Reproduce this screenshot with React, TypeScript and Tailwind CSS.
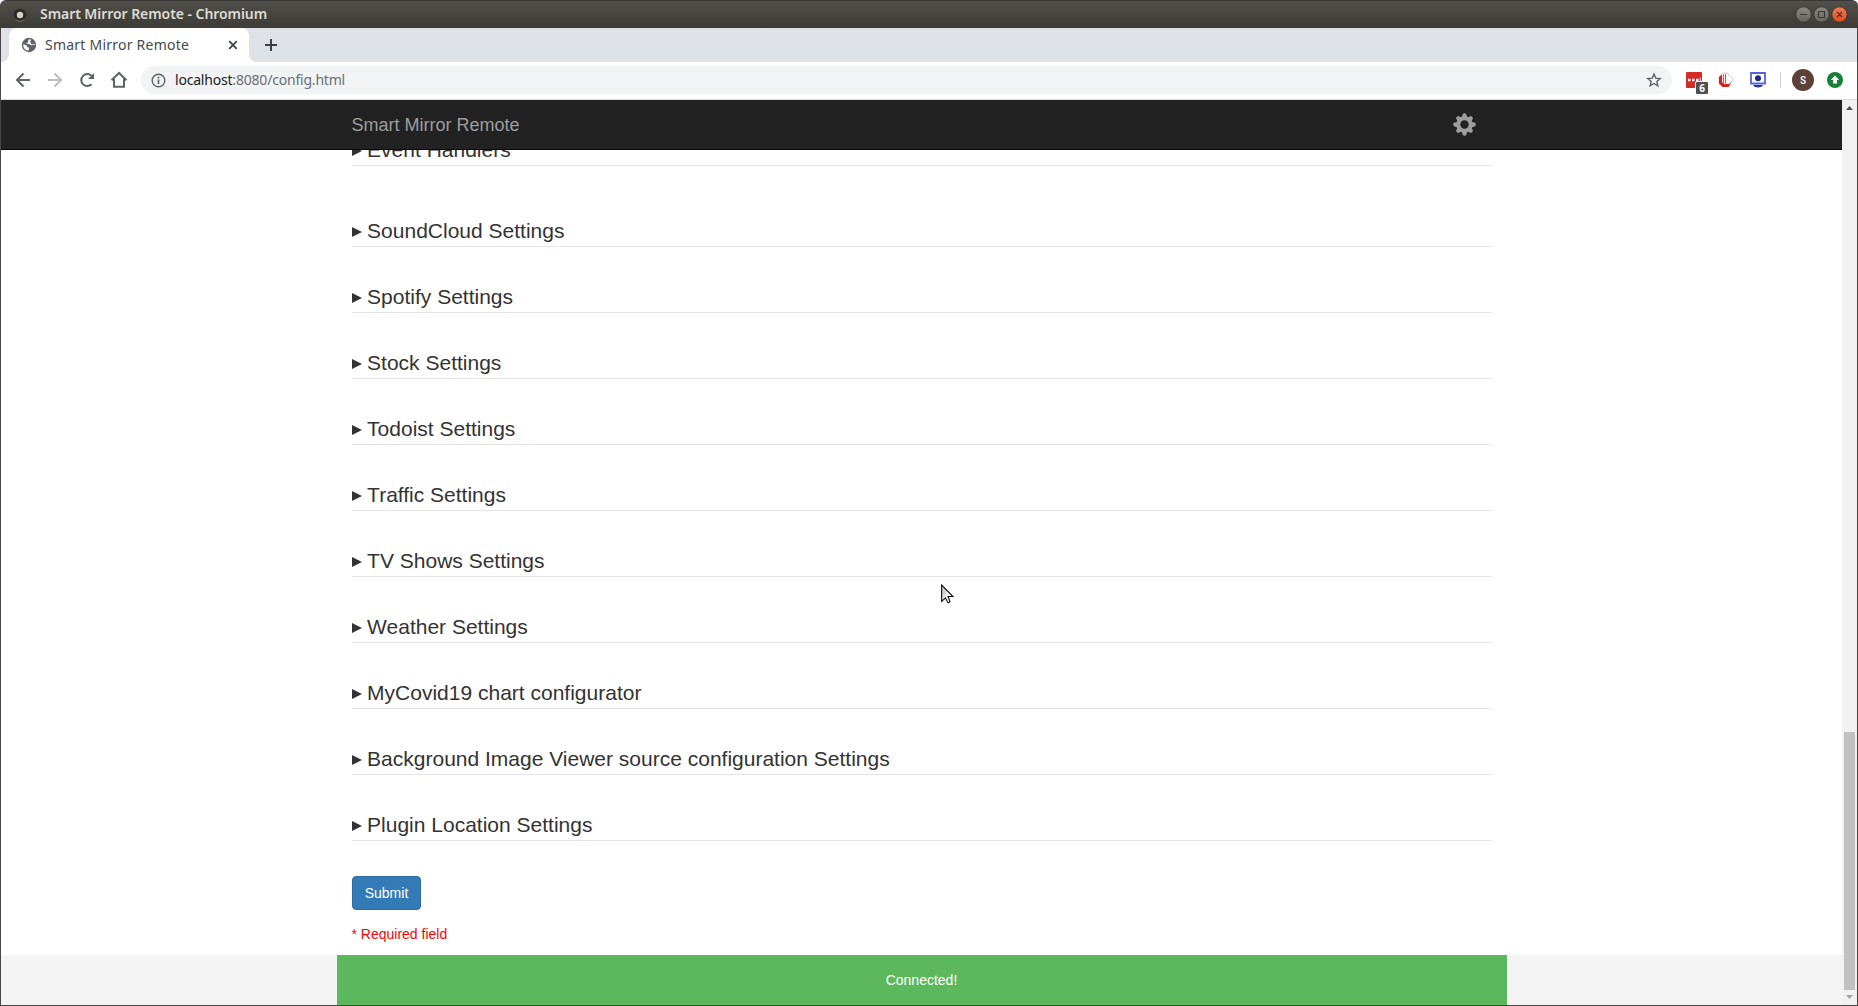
import React from "react";

const sections = [
  "SoundCloud Settings",
  "Spotify Settings",
  "Stock Settings",
  "Todoist Settings",
  "Traffic Settings",
  "TV Shows Settings",
  "Weather Settings",
  "MyCovid19 chart configurator",
  "Background Image Viewer source configuration Settings",
  "Plugin Location Settings",
];

function TitleBar() {
  return (
    <div className="flex h-7 shrink-0 items-center rounded-t-md border-t border-[#383733] bg-linear-to-b from-[#504f49] to-[#3c3b37] pl-[13px] pr-[9px]">
      <svg width="14" height="14" viewBox="0 0 14 14">
        <circle cx="7" cy="7" r="6.3" fill="#2b2a28" />
        <path d="M2.5 11.3a6.2 6.2 0 0 0 9 0" stroke="#77756f" fill="none" />
        <circle cx="7" cy="7" r="3.2" fill="#d3d0cb" />
      </svg>
      <span className="-mt-[2px] ml-[13px] w-[228px] whitespace-nowrap text-[14px] font-semibold leading-5 tracking-[-0.06px] text-[#dfdbd2]">
        Smart Mirror Remote - Chromium
      </span>
      <svg className="ml-auto" width="54" height="18" viewBox="0 0 54 18">
        <defs>
          <linearGradient id="gray" x1="0" y1="0" x2="0" y2="1">
            <stop offset="0" stopColor="#8b8981" />
            <stop offset="1" stopColor="#66645d" />
          </linearGradient>
          <linearGradient id="orange" x1="0" y1="0" x2="0" y2="1">
            <stop offset="0" stopColor="#f47b55" />
            <stop offset="1" stopColor="#df4a1a" />
          </linearGradient>
        </defs>
        <circle cx="8.500" cy="8.500" r="7.7" fill="url(#gray)" stroke="#34332f" strokeWidth=".8" />
        <circle cx="26.500" cy="8.500" r="7.7" fill="url(#gray)" stroke="#34332f" strokeWidth=".8" />
        <circle cx="44.500" cy="8.500" r="7.7" fill="url(#orange)" stroke="#34332f" strokeWidth=".8" />
        <path d="M5 8.500h7M23.500 5.500h6v6h-6zM42 6l5 5m0-5l-5 5" stroke="#3a3935" strokeWidth="1.2" fill="none" />
      </svg>
    </div>
  );
}

function TabStrip() {
  return (
    <div className="flex h-[34px] shrink-0 bg-[#dee1e6]">
      <div className="w-2 bg-white">
        <div className="h-full rounded-br-lg bg-[#dee1e6]" />
      </div>
      <div className="flex w-[240px] items-center rounded-t-lg bg-white pl-3 pr-[11px]">
        <svg width="16" height="16" viewBox="0 0 16 16">
          <circle cx="8" cy="8" r="7.2" fill="#5f6368" />
          <path
            d="M2.2 7.6c1.3 0 2.4.2 3.3 1 .6.6.3 1.3 1.2 1.6.9.2 1.6.2 1.5 1-.1.9-.6 1.2-.7 2.4C4.300 13.700 2 11 2.200 7.600zM8.600 1.900c-.3 1-1.300.8-1.500 1.700-.1.800.6 1 .1 1.700-.5.600-1.500.2-1.500 1 0 .9 1.600.6 2.500.7.9.1.8 1.100 1.700 1.300 1 .2 1.500-.7 2.600-.5.700.100 1.100.500 1.600.400.2-3.400-2.300-6-5.500-6.300z"
            fill="white"
          />
          <path d="M8.700 1.600c2.800.2 5.200 2.600 5.400 5.400-1 .9-1.600-.2-2.500.2-.8.300-1.700 0-1.600-.9.100-.8-1-.6-.9-1.500.1-.8.900-.700.900-1.500 0-.7-.8-.9-1.300-1.700z" fill="#5f6368" />
        </svg>
        <span className="ml-2 w-[146px] whitespace-nowrap text-[14px] leading-5 tracking-[0.23px] text-[#45494d]">Smart Mirror Remote</span>
        <svg className="ml-auto" width="10" height="10" viewBox="0 0 10 10">
          <path d="M1.200 1.200l7.600 7.600m0-7.600l-7.600 7.600" stroke="#3c4043" strokeWidth="1.700" />
        </svg>
      </div>
      <div className="w-2 bg-white">
        <div className="h-full rounded-bl-lg bg-[#dee1e6]" />
      </div>
      <svg className="ml-2 mt-[11px]" width="12" height="12" viewBox="0 0 12 12">
        <path d="M6 0v12M0 6h12" stroke="#3c4043" strokeWidth="2" />
      </svg>
    </div>
  );
}

function Toolbar() {
  return (
    <div className="flex h-[38px] shrink-0 items-center border-b border-[#dadce0] bg-white pb-px pl-[14px] pr-[14px]">
      <svg width="16" height="16" viewBox="0 0 16 16" fill="none" stroke="#5f6368" strokeWidth="2">
        <path d="M15 8H2.500M8.500 1.500L2 8l6.500 6.500" />
      </svg>
      <svg className="ml-4" width="16" height="16" viewBox="0 0 16 16" fill="none" stroke="#babcbe" strokeWidth="2">
        <path d="M1 8h12.500M7.500 1.500L14 8l-6.500 6.500" />
      </svg>
      <svg className="ml-4" width="16" height="16" viewBox="0 0 16 16">
        <path d="M12.600 12.300A6 6 0 1 1 12.500 3.800" fill="none" stroke="#5f6368" strokeWidth="2" />
        <path d="M15 1v6H9z" fill="#5f6368" />
      </svg>
      <svg className="ml-[15px]" width="18" height="18" viewBox="0 0 18 18">
        <path d="M1.500 9.300L9 2l7.500 7.300M4 8v7.700h10V8" fill="none" stroke="#5f6368" strokeWidth="2" />
      </svg>
      <div className="ml-[13px] flex h-7 flex-1 items-center rounded-full bg-[#f1f3f4] pl-[10px] pr-[10px]">
        <svg width="15" height="15" viewBox="0 0 15 15">
          <circle cx="7.500" cy="7.500" r="6.300" fill="none" stroke="#5f6368" strokeWidth="1.400" />
          <path d="M7.500 6.500v4.500M7.500 3.800v1.600" stroke="#5f6368" strokeWidth="1.600" />
        </svg>
        <span className="ml-[9px] whitespace-nowrap text-[14px] leading-5 tracking-[-0.2px] text-[#6b6f73]">
          <span className="text-[#202124]">localhost</span>:8080/config.html
        </span>
        <svg className="ml-auto" width="16" height="16" viewBox="0 0 16 16">
          <path d="M8 2l1.750 4.100 4.450.4-3.350 2.900 1 4.350L8 11.450 4.150 13.750l1-4.350L1.800 6.500l4.450-.4z" fill="none" stroke="#5f6368" strokeWidth="1.400" />
        </svg>
      </div>
      <div className="relative ml-[14px] h-4 w-4 rounded-[1px] bg-[#d32d27]">
        <svg width="16" height="16" viewBox="0 0 16 16">
          <path d="M2 6.700h2.500v2.500H2zM6 6.700h2.500v2.500H6zM10 6.700h2.500v2.500H10zM13.800 5.500h.8v4.500h-.8z" fill="white" />
        </svg>
        <span className="absolute left-[9px] top-[9px] h-[14px] w-[14px] rounded-[2px] border border-white bg-[#4d4f52] text-center text-[10px] font-bold leading-3 text-white outline-0">
          6
        </span>
      </div>
      <svg className="ml-4" width="16" height="16" viewBox="0 0 16 16">
        <path d="M5 1h4l6.500 6-5 7.300H4.500L1 11V5z" fill="white" stroke="#c9c9c9" />
        <path d="M1 5l3-2.500V10l2 2h5l2.500-2-3 5h-6L1 11.500z" fill="#d5251b" />
        <path d="M5.500 2.500v9M7.500 2v9.500" stroke="#df5750" strokeWidth="1.200" />
      </svg>
      <svg className="ml-4" width="16" height="16" viewBox="0 0 16 16">
        <path d="M1 1h14v10.500H1z" fill="white" stroke="#5663dc" strokeWidth="1.800" />
        <circle cx="8" cy="6.200" r="3" fill="#1c2884" />
        <path d="M3 13h10c-1 1.800-3 2.500-5 2.500S4 14.800 3 13z" fill="#26388f" />
      </svg>
      <div className="ml-[14px] h-4 w-px bg-[#c8cacd]" />
      <div className="ml-[11px] flex h-[22px] w-[22px] items-center justify-center rounded-full bg-[#5d4037] font-['Roboto',sans-serif] text-[10px] font-medium text-white">
        S
      </div>
      <svg className="ml-[13px]" width="16" height="16" viewBox="0 0 16 16">
        <circle cx="8" cy="8" r="8" fill="#188038" />
        <path d="M8 3.500l4.200 4.500H10v3.500H6V8H3.800z" fill="white" />
      </svg>
    </div>
  );
}

function Heading({ title }: { title: string }) {
  return (
    <div className="flex h-[31px] items-center border-b border-[#e5e5e5] text-[21px] leading-[30px] text-[#333]">
      <svg className="mr-[5.6px] mt-px shrink-0" width="10" height="10" viewBox="0 0 10 10">
        <path d="M0 0l10 5-10 5z" fill="#333" />
      </svg>
      <span className="whitespace-nowrap">{title}</span>
    </div>
  );
}

function Page() {
  return (
    <div className="flex min-w-0 flex-1 flex-col bg-white font-['Liberation_Sans',sans-serif]">
      <nav className="z-10 h-[50px] shrink-0 border-b border-[#080808] bg-[#222]">
        <div className="mx-auto flex h-full w-[1140px] items-center justify-between text-lg text-[#9d9d9d]">
          <span>Smart Mirror Remote</span>
          <svg className="mr-4 -mt-px" width="23" height="23" viewBox="0 0 24 24">
            <g fill="#9d9d9d">
              <path d="M9 5L10.300.8q1.700-1 3.400 0L15 5v14l-1.300 4.200q-1.700 1-3.400 0L9 19z" />
              <path d="M9 5L10.300 1.200q1.700-1 3.400 0L15 5v14l-1.300 3.800q-1.700 1-3.400 0L9 19z" transform="rotate(45 12 12)" />
              <path d="M9 5L10.300.8q1.700-1 3.400 0L15 5v14l-1.300 4.200q-1.700 1-3.400 0L9 19z" transform="rotate(90 12 12)" />
              <path d="M9 5L10.300 1.200q1.700-1 3.400 0L15 5v14l-1.300 3.800q-1.700 1-3.400 0L9 19z" transform="rotate(135 12 12)" />
              <circle cx="12" cy="12" r="8.600" />
            </g>
            <circle cx="12" cy="12" r="4.400" fill="#222" />
          </svg>
        </div>
      </nav>
      <main className="min-h-0 flex-1">
        <div className="mx-auto -mt-[15px] w-[1140px]">
          <Heading title="Event Handlers" />
          <div className="mt-[50px] flex flex-col gap-[35px]">
            {sections.map((title) => (
              <Heading key={title} title={title} />
            ))}
          </div>
          <button className="mt-[35px] block h-[34px] w-[69px] rounded border border-[#2e6da4] bg-[#337ab7] pl-px text-sm text-white">
            Submit
          </button>
          <p className="mt-[14px] text-sm text-[#f00]">* Required field</p>
        </div>
      </main>
      <footer className="h-[50px] shrink-0 bg-[#f4f4f4]">
        <div className="mx-auto flex h-full w-[1170px] items-center justify-center bg-[#5cb85c] text-sm text-white">Connected!</div>
      </footer>
    </div>
  );
}

function Scrollbar() {
  return (
    <div className="flex w-[15px] shrink-0 flex-col items-center justify-between bg-[#f1f1f1] pt-[6px] pb-[6px]">
      <svg width="7" height="4" viewBox="0 0 7 4">
        <path d="M0 4L3.500 0 7 4z" fill="#505050" />
      </svg>
      <div className="flex flex-col items-center gap-[5px]">
        <div className="h-[258px] w-[11px] bg-[#c1c1c1]" />
        <svg width="7" height="4" viewBox="0 0 7 4">
          <path d="M0 0l3.500 4L7 0z" fill="#a3a3a3" />
        </svg>
      </div>
    </div>
  );
}

export default function App() {
  return (
    <div className="relative flex h-[1006px] w-[1858px] flex-col overflow-hidden bg-white font-['Noto_Sans',sans-serif]">
      <TitleBar />
      <div className="flex min-h-0 flex-1 flex-col border-x border-b border-[#484746]">
        <TabStrip />
        <Toolbar />
        <div className="flex min-h-0 flex-1">
          <Page />
          <Scrollbar />
        </div>
      </div>
      <svg className="absolute left-[941px] top-[584px]" width="13" height="20" viewBox="0 0 13 20">
        <defs>
          <linearGradient id="pointer" x1="0" y1="0" x2="1" y2="1">
            <stop offset="0.300" stopColor="#ccc" />
            <stop offset="0.600" stopColor="#fff" />
          </linearGradient>
        </defs>
        <path d="M.6 1v16.400l3.900-3.600 2.200 4.600q1.200.8 2.300-.7L7 12.500h5z" fill="url(#pointer)" stroke="#111" strokeWidth="1.100" />
      </svg>
    </div>
  );
}
